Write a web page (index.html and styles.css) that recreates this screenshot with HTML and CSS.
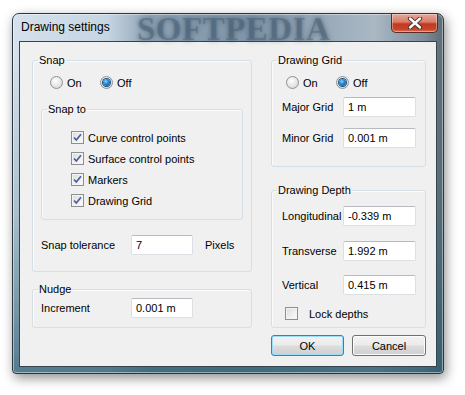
FILE: index.html
```html
<!DOCTYPE html>
<html>
<head>
<meta charset="utf-8">
<title>Drawing settings</title>
<link rel="stylesheet" href="styles.css">
</head>
<body>
<div class="window">
  <div class="titlebar">
    <span class="title">Drawing settings</span>
    <span class="watermark">SOFTPEDIA</span>
    <span class="close">
      <svg width="16" height="12" viewBox="0 0 16 12">
        <path d="M3 1.5 L13 10.5 M13 1.5 L3 10.5" stroke="#3a2a28" stroke-width="4.2" stroke-linecap="round"/>
        <path d="M3 1.5 L13 10.5 M13 1.5 L3 10.5" stroke="#ffffff" stroke-width="2.4" stroke-linecap="round"/>
      </svg>
    </span>
  </div>
  <div class="client">
    <div class="col col-left">
      <fieldset class="group snap">
        <legend>Snap</legend>
        <div class="radios">
          <label class="opt opt-first"><span class="radio"></span>On</label>
          <label class="opt"><span class="radio checked"></span>Off</label>
        </div>
        <fieldset class="group snapto">
          <legend>Snap to</legend>
          <div class="checks">
            <label class="check"><span class="box"><svg width="11" height="11" viewBox="0 0 11 11"><path d="M2 5.5 L4.3 8 L9 2.2" fill="none" stroke="#4d5f93" stroke-width="1.7"/></svg></span>Curve control points</label>
            <label class="check"><span class="box"><svg width="11" height="11" viewBox="0 0 11 11"><path d="M2 5.5 L4.3 8 L9 2.2" fill="none" stroke="#4d5f93" stroke-width="1.7"/></svg></span>Surface control points</label>
            <label class="check"><span class="box"><svg width="11" height="11" viewBox="0 0 11 11"><path d="M2 5.5 L4.3 8 L9 2.2" fill="none" stroke="#4d5f93" stroke-width="1.7"/></svg></span>Markers</label>
            <label class="check"><span class="box"><svg width="11" height="11" viewBox="0 0 11 11"><path d="M2 5.5 L4.3 8 L9 2.2" fill="none" stroke="#4d5f93" stroke-width="1.7"/></svg></span>Drawing Grid</label>
          </div>
        </fieldset>
        <div class="row tol">
          <span class="lbl lbl-wide">Snap tolerance</span>
          <span class="field field-short">7</span>
          <span class="unit">Pixels</span>
        </div>
      </fieldset>
      <fieldset class="group nudge">
        <legend>Nudge</legend>
        <div class="row">
          <span class="lbl lbl-wide">Increment</span>
          <span class="field field-short">0.001 m</span>
        </div>
      </fieldset>
    </div>
    <div class="col col-right">
      <fieldset class="group grid">
        <legend>Drawing Grid</legend>
        <div class="radios radios-right">
          <label class="opt opt-first"><span class="radio"></span>On</label>
          <label class="opt"><span class="radio checked"></span>Off</label>
        </div>
        <div class="row row-major">
          <span class="lbl">Major Grid</span>
          <span class="field">1 m</span>
        </div>
        <div class="row row-minor">
          <span class="lbl">Minor Grid</span>
          <span class="field">0.001 m</span>
        </div>
      </fieldset>
      <fieldset class="group depth">
        <legend>Drawing Depth</legend>
        <div class="row row-long">
          <span class="lbl">Longitudinal</span>
          <span class="field">-0.339 m</span>
        </div>
        <div class="row row-trans">
          <span class="lbl">Transverse</span>
          <span class="field">1.992 m</span>
        </div>
        <div class="row row-vert">
          <span class="lbl">Vertical</span>
          <span class="field">0.415 m</span>
        </div>
        <label class="check lock"><span class="box"></span>Lock depths</label>
      </fieldset>
      <div class="buttons">
        <button class="btn btn-default">OK</button>
        <button class="btn btn-cancel">Cancel</button>
      </div>
    </div>
  </div>
</div>
</body>
</html>
```

FILE: styles.css
```css
* { box-sizing: border-box; }
html, body { margin: 0; padding: 0; background: #ffffff; }
body {
  width: 465px;
  height: 395px;
  overflow: hidden;
  font-family: "Liberation Sans", Arial, sans-serif;
  font-size: 11px;
  color: #000;
}

.window {
  margin: 13px 0 0 12px;
  width: 432px;
  height: 361px;
  padding: 0 6px 6px 6px;
  border: 1px solid #2a3640;
  border-radius: 7px 7px 4px 4px;
  display: flex;
  flex-direction: column;
  background:
    linear-gradient(to bottom, rgba(40,85,105,0) 0, rgba(40,85,105,0) 40px, rgba(45,95,115,0.25) 55%, rgba(40,90,110,0.75) 100%),
    linear-gradient(to right, #d5e1ec 0%, #c6d5e3 22%, #8ea2b4 32%, #8297aa 55%, #98a9b8 72%, #aab8c4 84%, #7b8b97 96%, #5d6b75 100%);
  box-shadow: inset 0 0 0 1px rgba(255,255,255,0.45), 2px 4px 12px rgba(0,0,0,0.45);
}

.titlebar {
  position: relative;
  height: 27px;
  display: flex;
  align-items: flex-start;
}
.title {
  font-size: 12px;
  line-height: 15px;
  margin: 6px 0 0 2px;
  color: #000;
  position: relative;
  z-index: 1;
}
.watermark {
  position: absolute;
  left: 118px;
  top: -2px;
  font-family: "Liberation Serif", serif;
  font-weight: bold;
  font-size: 33px;
  line-height: 34px;
  letter-spacing: 0.5px;
  color: rgba(70, 92, 114, 0.45);
  text-shadow: 0 0 5px rgba(60, 82, 104, 0.7);
}
.close {
  margin-left: auto;
  margin-right: -1px;
  width: 47px;
  height: 19px;
  border: 1px solid #5b2b24;
  border-top: none;
  border-radius: 0 0 5px 5px;
  background: linear-gradient(to bottom, #e6a89a 0%, #d77c69 45%, #c2381f 55%, #c8452a 85%, #d8785c 100%);
  box-shadow: inset 0 0 0 1px rgba(255,255,255,0.35);
  display: flex;
  align-items: center;
  justify-content: center;
  position: relative;
  z-index: 1;
}
.close svg { display: block; }

.client {
  flex: 1;
  display: flex;
  gap: 19px;
  padding: 11px 10px 0 12px;
  border: 1px solid #34434e;
  background: #f0f0f0;
}
.col { display: flex; flex-direction: column; }
.col-left { width: 221px; }
.col-right { width: 155px; }

.group {
  margin: 0;
  padding: 0;
  min-width: 0;
  border: 1px solid #d5dfe5;
  border-radius: 3px;
  box-shadow: inset 1px 1px 0 #fbfbfb;
}
.group legend {
  padding: 0 1px;
  margin-left: 5px;
  line-height: 14px;
  font-size: 11px;
}

.snap { padding: 0 0 16px 0; }
.snapto {
  width: 202px;
  margin: 12px 0 0 8px;
  padding: 11px 0 8px 0;
}
.checks { display: flex; flex-direction: column; padding-left: 29px; }
.tol { margin-top: 15px; padding-left: 8px; }
.nudge { margin-top: 10px; padding: 2px 0 9px 0; }
.nudge .row { padding-left: 8px; }

.radios { display: flex; align-items: center; height: 15px; margin: 8px 0 0 17px; }
.radios-right { margin-left: 14px; }
.opt { display: flex; align-items: center; }
.opt-first { width: 50px; }
.radio {
  width: 13px;
  height: 13px;
  border-radius: 50%;
  border: 1px solid #8d9294;
  background: radial-gradient(circle at 40% 35%, #ffffff 0%, #e9e9e9 45%, #cfd1d3 100%);
  margin-right: 4px;
  display: flex;
  align-items: center;
  justify-content: center;
}
.radio.checked::after {
  content: "";
  width: 7px;
  height: 7px;
  border-radius: 50%;
  background: radial-gradient(circle at 40% 35%, #8fd4fb 0%, #2a8ad4 40%, #0d4c8c 100%);
  box-shadow: 0 0 0 1px #1c4f7e;
}

.check { display: flex; align-items: center; height: 21px; }
.box {
  width: 13px;
  height: 13px;
  border: 1px solid #8e8f8f;
  background: linear-gradient(135deg, #d8d9da 0%, #ededee 50%, #fbfbfb 100%);
  box-shadow: inset 0 0 0 1px #f4f4f4;
  margin-right: 4px;
  display: flex;
  align-items: center;
  justify-content: center;
  flex: none;
}
.box svg { display: block; }

.row { display: flex; align-items: center; height: 20px; }
.lbl { width: 61px; white-space: nowrap; }
.lbl-wide { width: 90px; }
.field {
  display: flex;
  align-items: center;
  height: 20px;
  width: 73px;
  padding: 0 4px;
  background: #ffffff;
  border: 1px solid #dcdfe4;
  border-top-color: #b7bbc1;
  border-radius: 2px;
  white-space: nowrap;
}
.field-short { width: 62px; }
.unit { margin-left: 12px; }

.grid { padding: 0 0 18px 0; }
.grid .row { padding-left: 10px; }
.row-major { margin-top: 7px; }
.row-minor { margin-top: 11px; }

.depth { margin-top: 16px; padding: 0 0 6px 0; }
.depth .row { padding-left: 10px; }
.row-long { margin-top: 9px; }
.row-trans { margin-top: 15px; }
.row-vert { margin-top: 14px; }
.lock { height: 15px; margin: 11px 0 0 13px; }
.lock .box { margin-right: 11px; }

.buttons { display: flex; gap: 8px; margin-top: 7px; }
.btn {
  height: 21px;
  width: 73px;
  padding: 0;
  font-family: "Liberation Sans", Arial, sans-serif;
  font-size: 11px;
  color: #000;
  border: 1px solid #707070;
  border-radius: 3px;
  background: linear-gradient(to bottom, #f2f2f2 0%, #ebebeb 48%, #dddddd 52%, #cfcfcf 100%);
  box-shadow: inset 0 0 0 1px #fcfcfc;
}
.btn-cancel { width: 74px; }
.btn-default {
  border-color: #3c7fb1;
  box-shadow: inset 0 0 0 1px #9fdcf8;
}
```
